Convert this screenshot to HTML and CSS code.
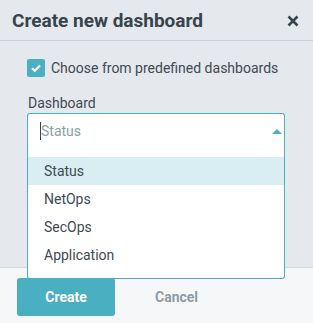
FILE: index.html
```html
<!DOCTYPE html>
<html lang="en">
<head>
    <meta charset="UTF-8">
    <title>Create new dashboard</title>
    <link rel="stylesheet" href="styles.css">
</head>
<body>
    <div class="dialog">
        <div class="dialog-header">
            <h1 class="dialog-title">Create new dashboard</h1>
            <button class="close-btn" aria-label="Close">
                <svg width="12" height="12" viewBox="0 0 12 12">
                    <path d="M1.5 1.5 L10.5 10.5 M10.5 1.5 L1.5 10.5" stroke="#36444e" stroke-width="2.6" stroke-linecap="butt"/>
                </svg>
            </button>
        </div>

        <div class="dialog-body">
            <label class="check-row">
                <span class="checkbox">
                    <svg width="12" height="10" viewBox="0 0 12 10">
                        <path d="M2 5.2 L4.8 7.8 L10 2.4" fill="none" stroke="#fff" stroke-width="2.2"/>
                    </svg>
                </span>
                <span class="check-label">Choose from predefined dashboards</span>
            </label>

            <div class="field-label">Dashboard</div>
            <div class="select">
                <span class="caret"></span>
                <span class="select-value">Status</span>
                <span class="arrow"></span>
                <ul class="menu">
                    <li class="menu-item active">Status</li>
                    <li class="menu-item">NetOps</li>
                    <li class="menu-item">SecOps</li>
                    <li class="menu-item">Application</li>
                </ul>
            </div>
        </div>

        <div class="dialog-footer">
            <button class="btn btn-primary">Create</button>
            <button class="btn btn-link">Cancel</button>
        </div>
    </div>
</body>
</html>
```

FILE: styles.css
```css
body, html {
    margin: 0;
    height: 100%;
    overflow: hidden;
}

* {
    box-sizing: border-box;
}

body {
    font-family: Roboto, "Liberation Sans", sans-serif;
    color: #36444e;
    background: #e5e8ec;
}

.dialog {
    display: flex;
    flex-direction: column;
    height: 323px;
}

.dialog-header {
    height: 41px;
    flex-shrink: 0;
    display: flex;
    align-items: center;
    justify-content: space-between;
    padding: 0 14px 0 12px;
    border-bottom: 1px solid #c9cfd4;
}

.dialog-title {
    margin: 0;
    font-size: 19px;
    font-weight: 700;
    color: #36444e;
}

.close-btn {
    border: none;
    background: none;
    padding: 0;
    display: flex;
    margin-top: 1px;
}

.dialog-body {
    flex: 1;
    padding: 18px 28px 0 27px;
}

.check-row {
    display: flex;
    align-items: center;
    gap: 6px;
    height: 18px;
    white-space: nowrap;
}

.checkbox {
    width: 18px;
    height: 18px;
    border-radius: 2px;
    background: #4ab0c1;
    display: flex;
    align-items: center;
    justify-content: center;
}

.check-label {
    font-size: 14px;
    color: #3d4a54;
}

.field-label {
    margin-top: 16px;
    font-size: 14px;
    line-height: 20px;
    color: #3d4a54;
    padding-left: 1px;
}

.select {
    position: relative;
    height: 36px;
    background: #fff;
    border: 1px solid #4ab0c1;
    border-bottom: 1px solid #cdd4d9;
    border-radius: 3px 3px 0 0;
    display: flex;
    align-items: center;
    padding: 0 12px;
}

.caret {
    width: 1px;
    height: 18px;
    background: #36444e;
}

.select-value {
    flex: 1;
    font-size: 14px;
    color: #8e9da7;
}

.arrow {
    width: 0;
    height: 0;
    border-left: 5px solid transparent;
    border-right: 5px solid transparent;
    border-bottom: 5px solid #4ab0c1;
    margin-right: -10px;
}

.menu {
    position: absolute;
    top: 100%;
    left: -1px;
    right: -1px;
    margin: 0;
    padding: 9px 0;
    list-style: none;
    background: #fff;
    border: 1px solid #4ab0c1;
    border-top: none;
    border-radius: 0 0 3px 3px;
    z-index: 10;
}

.menu-item {
    height: 28px;
    line-height: 28px;
    padding-left: 16px;
    font-size: 14px;
    color: #3d4a54;
}

.menu-item.active {
    background: #d9eef2;
}

.dialog-footer {
    height: 56px;
    flex-shrink: 0;
    background: #f6f7f9;
    border-top: 1px solid #d3d8dc;
    display: flex;
    align-items: flex-start;
    padding: 10px 0 0 17px;
}

.btn {
    font-family: Roboto, "Liberation Sans", sans-serif;
    font-size: 14px;
    font-weight: 700;
    border: none;
    cursor: pointer;
}

.btn-primary {
    width: 98px;
    height: 38px;
    border-radius: 3px;
    background: #4ab0c1;
    color: #fff;
}

.btn-link {
    background: none;
    color: #8d9ca6;
    height: 38px;
    padding: 0 0 0 40px;
}
```
